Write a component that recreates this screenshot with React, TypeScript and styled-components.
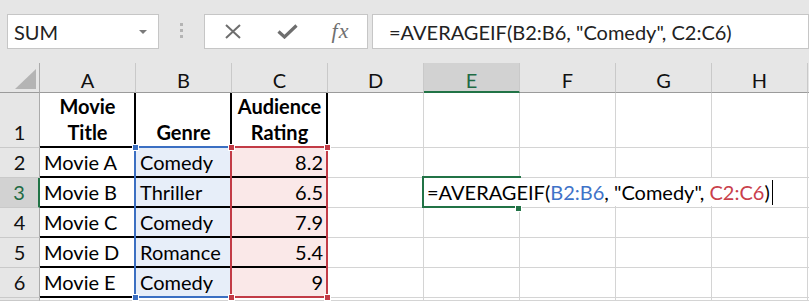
import React from "react";
import styled, { createGlobalStyle } from "styled-components";

const GlobalStyle = createGlobalStyle`
  html, body { margin: 0; padding: 0; background: #ffffff; }
  body { font-family: Lato, "Open Sans", Arial, sans-serif; }
  * { box-sizing: border-box; }
`;

const FONT = `Lato, "Liberation Sans", Arial, sans-serif`;
const GREEN = "#217346";
const BLUE = "#3b6fc2";
const RED = "#c23b46";

const Page = styled.div`
  width: 809px;
  height: 301px;
  overflow: hidden;
  background: #ffffff;
  font-family: ${FONT};
`;

const TopBar = styled.div`
  height: 63px;
  background: #e6e6e6;
  display: flex;
  align-items: flex-start;
  padding: 14px 0 0 7px;
`;

const NameBox = styled.div`
  width: 152px;
  height: 35px;
  background: #ffffff;
  border: 1px solid #c6c6c6;
  display: flex;
  align-items: center;
  justify-content: space-between;
  padding: 0 11px 0 6px;
  font-size: 20px;
  color: #222;
`;

const Caret = styled.span`
  width: 0;
  height: 0;
  border-left: 4px solid transparent;
  border-right: 4px solid transparent;
  border-top: 4px solid #7a7a7a;
  margin-top: 1px;
`;

const Grip = styled.div`
  margin: 9px 21px 0 21px;
  width: 3px;
  display: flex;
  flex-direction: column;
  gap: 3px;
`;

const GripDot = styled.span`
  width: 3px;
  height: 3px;
  background: #b4b4b4;
`;

const FxButtons = styled.div`
  width: 164px;
  height: 35px;
  background: #ffffff;
  border: 1px solid #c6c6c6;
  display: grid;
  grid-template-columns: 55px 54px 53px;
  align-items: center;
  justify-items: center;
`;

const IconSlot = styled.div`
  display: flex;
  align-items: center;
  justify-content: center;
  color: #6e6e6e;
`;

const FxText = styled.span`
  font-family: "Liberation Serif", "DejaVu Serif", serif;
  font-style: italic;
  font-size: 22px;
  letter-spacing: 1px;
  color: #707070;
  line-height: 1;
  margin-top: -2px;
`;

const FormulaField = styled.div`
  margin-left: 4px;
  width: 437px;
  height: 35px;
  background: #ffffff;
  border: 1px solid #c6c6c6;
  display: flex;
  align-items: center;
  padding-left: 16px;
  font-size: 20px;
  color: #222;
  white-space: pre;
`;

const Sheet = styled.div`
  position: relative;
  height: 238px;
  overflow: hidden;
  display: grid;
  grid-template-columns: 40px repeat(8, 96px) 1fr;
  grid-template-rows: 30px 55px repeat(5, 30px) 1fr;
  font-size: 20px;
`;

const Corner = styled.div`
  background: #e6e6e6;
  border-right: 1px solid #ababab;
  border-bottom: 1px solid #9b9b9b;
  position: relative;
`;

const CornerTriangle = styled.div`
  position: absolute;
  left: 15px;
  top: 6px;
  width: 21px;
  height: 20px;
  background: #b4b4b4;
  clip-path: polygon(100% 0, 100% 100%, 0 100%);
`;

const ColHeader = styled.div<{ $active?: boolean }>`
  background: ${(p) => (p.$active ? "#d2d2d2" : "#e6e6e6")};
  border-right: 1px solid #c9c9c9;
  border-bottom: ${(p) => (p.$active ? `2px solid ${GREEN}` : "1px solid #9b9b9b")};
  display: flex;
  align-items: center;
  justify-content: center;
  padding-top: 5px;
  color: ${(p) => (p.$active ? "#1f6b44" : "#111")};
`;

const RowHeader = styled.div<{ $active?: boolean }>`
  background: ${(p) => (p.$active ? "#d2d2d2" : "#e6e6e6")};
  border-right: ${(p) => (p.$active ? `2px solid ${GREEN}` : "1px solid #ababab")};
  border-bottom: 1px solid #c9c9c9;
  display: flex;
  align-items: flex-end;
  justify-content: center;
  line-height: 26px;
  padding-bottom: 2px;
  color: ${(p) => (p.$active ? "#1f6b44" : "#111")};
`;

type Fill = "none" | "blue" | "red";

const Cell = styled.div<{
  $align?: "left" | "center" | "right";
  $bold?: boolean;
  $fill?: Fill;
  $thick?: boolean;
}>`
  background: ${(p) =>
    p.$fill === "blue" ? "#e7eef9" : p.$fill === "red" ? "#fae8e8" : "#ffffff"};
  border-right: ${(p) => (p.$thick ? "2px solid #000" : "1px solid #d4d4d4")};
  border-bottom: ${(p) => (p.$thick ? "2px solid #000" : "1px solid #d4d4d4")};
  display: flex;
  align-items: flex-end;
  justify-content: ${(p) =>
    p.$align === "right" ? "flex-end" : p.$align === "center" ? "center" : "flex-start"};
  text-align: ${(p) => p.$align ?? "left"};
  padding: 0 3px 1px 4px;
  line-height: 26px;
  font-weight: ${(p) => (p.$bold ? 700 : 400)};
  white-space: pre;
  color: #000;
  overflow: hidden;
`;

const RangeFrame = styled.div<{ $color: string; $left: number }>`
  position: absolute;
  left: ${(p) => p.$left}px;
  top: 83px;
  width: 98px;
  height: 152px;
  border: 2px solid ${(p) => p.$color};
  pointer-events: none;
`;

const Handle = styled.div<{ $color: string; $x: number; $y: number }>`
  position: absolute;
  left: ${(p) => p.$x - 3}px;
  top: ${(p) => p.$y - 3}px;
  width: 7px;
  height: 7px;
  background: ${(p) => p.$color};
  border: 1px solid #ffffff;
`;

const ActiveFrame = styled.div`
  position: absolute;
  left: 422px;
  top: 113px;
  width: 99px;
  height: 32px;
  border: 2px solid ${GREEN};
`;

const EditBox = styled.div`
  position: absolute;
  left: 424px;
  top: 115px;
  width: 382px;
  height: 28px;
  background: #ffffff;
  display: flex;
  align-items: center;
  padding-left: 3px;
  white-space: pre;
  color: #000;
  line-height: 26px;
`;

const Ref = styled.span<{ $color: string }>`
  color: ${(p) => p.$color};
`;

const TextCursor = styled.span`
  display: inline-block;
  width: 1px;
  height: 25px;
  background: #000;
  margin-left: 2px;
`;

const COLS = ["A", "B", "C", "D", "E", "F", "G", "H", ""];

type RowData = {
  n: number;
  cells: string[];
  header?: boolean;
};

const ROWS: RowData[] = [
  { n: 1, cells: ["Movie\nTitle", "Genre", "Audience\nRating"], header: true },
  { n: 2, cells: ["Movie A", "Comedy", "8.2"] },
  { n: 3, cells: ["Movie B", "Thriller", "6.5"] },
  { n: 4, cells: ["Movie C", "Comedy", "7.9"] },
  { n: 5, cells: ["Movie D", "Romance", "5.4"] },
  { n: 6, cells: ["Movie E", "Comedy", "9"] },
  { n: 7, cells: [] },
];

const CloseIcon = () => (
  <svg width="18" height="15" viewBox="0 0 18 15">
    <path d="M2 1 L16 14 M16 1 L2 14" stroke="#6e6e6e" strokeWidth="2" fill="none" />
  </svg>
);

const CheckIcon = () => (
  <svg width="21" height="15" viewBox="0 0 21 15">
    <path
      d="M1.5 7.5 L7.5 13 L19.5 1.5"
      stroke="#6e6e6e"
      strokeWidth="3.2"
      fill="none"
      strokeLinejoin="miter"
    />
  </svg>
);

export default function App() {
  return (
    <Page>
      <GlobalStyle />
      <TopBar>
        <NameBox>
          <span>SUM</span>
          <Caret />
        </NameBox>
        <Grip>
          <GripDot />
          <GripDot />
          <GripDot />
        </Grip>
        <FxButtons>
          <IconSlot>
            <CloseIcon />
          </IconSlot>
          <IconSlot>
            <CheckIcon />
          </IconSlot>
          <IconSlot>
            <FxText>fx</FxText>
          </IconSlot>
        </FxButtons>
        <FormulaField>=AVERAGEIF(B2:B6, "Comedy", C2:C6)</FormulaField>
      </TopBar>
      <Sheet>
        <Corner>
          <CornerTriangle />
        </Corner>
        {COLS.map((c, i) => (
          <ColHeader key={`h${i}`} $active={c === "E"}>
            {c}
          </ColHeader>
        ))}
        {ROWS.map((row) => (
          <React.Fragment key={`r${row.n}`}>
            <RowHeader $active={row.n === 3}>{row.n < 7 ? row.n : ""}</RowHeader>
            {COLS.map((_, ci) => {
              const inTable = ci < 3 && row.n !== 7;
              const text = row.cells[ci] ?? "";
              const fill: Fill =
                !row.header && inTable && ci === 1
                  ? "blue"
                  : !row.header && inTable && ci === 2
                  ? "red"
                  : "none";
              return (
                <Cell
                  key={`c${row.n}-${ci}`}
                  $thick={inTable}
                  $bold={row.header}
                  $fill={fill}
                  $align={row.header ? "center" : ci === 2 ? "right" : "left"}
                >
                  {text}
                </Cell>
              );
            })}
          </React.Fragment>
        ))}
        <RangeFrame $color={BLUE} $left={134} />
        <RangeFrame $color={RED} $left={230} />
        <Handle $color={BLUE} $x={135} $y={84} />
        <Handle $color={BLUE} $x={135} $y={234} />
        <Handle $color={RED} $x={231} $y={84} />
        <Handle $color={RED} $x={327} $y={84} />
        <Handle $color={RED} $x={231} $y={234} />
        <Handle $color={RED} $x={327} $y={234} />
        <ActiveFrame />
        <EditBox>
          =AVERAGEIF(<Ref $color="#3f73c8">B2:B6</Ref>, "Comedy", <Ref $color="#c9404b">C2:C6</Ref>)
          <TextCursor />
        </EditBox>
        <Handle $color={GREEN} $x={518} $y={145} />
      </Sheet>
    </Page>
  );
}
